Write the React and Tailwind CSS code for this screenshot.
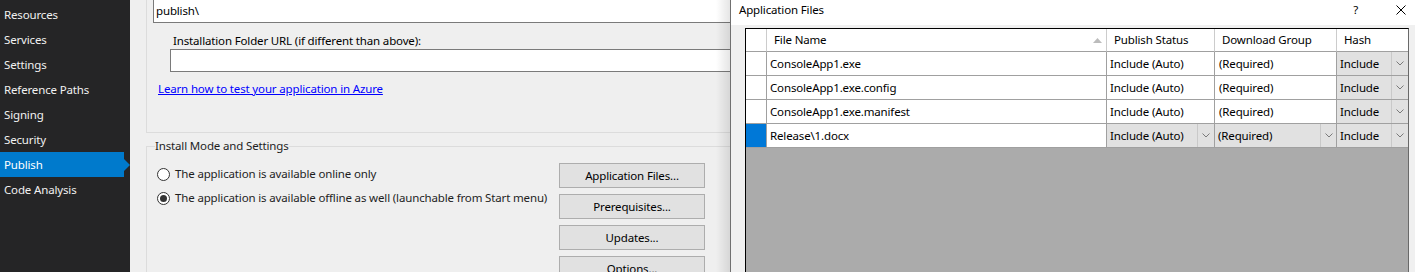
import React from "react";

const sideItems = [
  "Resources",
  "Services",
  "Settings",
  "Reference Paths",
  "Signing",
  "Security",
  "Publish",
  "Code Analysis",
];

function Chevron() {
  return (
    <svg width="8" height="5" viewBox="0 0 8 5">
      <polyline points="0.5,0.5 4,4 7.5,0.5" fill="none" stroke="#7a7a7a" strokeWidth="1" />
    </svg>
  );
}

function Combo({ text, arrowW = "w-[17px]" }) {
  return (
    <div className="flex h-full bg-[#e1e1e1]">
      <div className="flex flex-1 items-center pl-[3px] whitespace-nowrap">{text}</div>
      <div className={`${arrowW} flex shrink-0 items-center justify-center border-l border-[#c9c9c9]`}>
        <Chevron />
      </div>
    </div>
  );
}

function Radio({ checked, label }) {
  return (
    <div className="flex h-[24px] items-center gap-[5px] pl-[10px]">
      <div className="flex h-[13px] w-[13px] shrink-0 items-center justify-center rounded-full border border-[#333333] bg-white">
        {checked && <div className="h-[7px] w-[7px] rounded-full bg-[#333333]" />}
      </div>
      <span className="whitespace-nowrap text-[#1e1e1e]">{label}</span>
    </div>
  );
}

function Btn({ children }) {
  return (
    <div className="flex h-[25px] w-[146px] shrink-0 items-center justify-center border border-[#adadad] bg-[#e1e1e1] text-black">
      {children}
    </div>
  );
}

const rows = [
  { name: "ConsoleApp1.exe" },
  { name: "ConsoleApp1.exe.config" },
  { name: "ConsoleApp1.exe.manifest" },
  { name: "Release\\1.docx", active: true },
];

export default function App() {
  return (
    <div className="flex h-[272px] w-[1415px] overflow-hidden font-['Noto_Sans',sans-serif] text-[11.5px] leading-[16px] tracking-[-0.15px]">
      {/* Sidebar */}
      <div className="flex w-[130px] shrink-0 flex-col bg-[#252526] pt-[2px] text-[#f1f1f1]">
        {sideItems.map((it) =>
          it === "Publish" ? (
            <div key={it} className="flex h-[25px] items-center">
              <div className="flex h-full w-[124px] items-center bg-[#007acc] pl-[4px] text-white">{it}</div>
              <svg width="6" height="12" viewBox="0 0 6 12">
                <polygon points="0,0 6,6 0,12" fill="#007acc" />
              </svg>
            </div>
          ) : (
            <div key={it} className="flex h-[25px] items-center pl-[4px]">
              {it}
            </div>
          )
        )}
      </div>

      {/* Main panel */}
      <div className="relative w-[600px] shrink-0 overflow-hidden bg-[#efefef] pl-[16px] text-black">
        <div className="flex h-[133px] flex-col border-b border-l border-[#dcdcdc] pl-[6px]">
          <div className="mt-[-1px] flex h-[24px] w-[590px] shrink-0 items-center border border-[#7a7a7a] bg-white pl-[2px]">
            publish\
          </div>
          <div className="mt-[10px] h-[16px] shrink-0 pl-[20px] whitespace-nowrap">
            Installation Folder URL (if different than above):
          </div>
          <div className="ml-[17px] h-[23px] w-[580px] shrink-0 border border-[#7a7a7a] bg-white" />
          <div className="ml-[5px] mt-[9px] h-[16px] shrink-0">
            <span className="text-[#0000ff] underline">Learn how to test your application in Azure</span>
          </div>
        </div>

        <fieldset className="mt-[5px] h-[200px] min-w-0 border-l border-t border-[#dcdcdc]">
          <legend className="ml-[8px] px-0 leading-[16px] text-[#1e1e1e]">Install Mode and Settings</legend>
          <div className="flex">
            <div className="flex w-[412px] shrink-0 flex-col pt-[8px]">
              <Radio label="The application is available online only" />
              <Radio checked label="The application is available offline as well (launchable from Start menu)" />
            </div>
            <div className="flex flex-col gap-[6px] pt-[9px]">
              <Btn>Application Files...</Btn>
              <Btn>Prerequisites...</Btn>
              <Btn>Updates...</Btn>
              <Btn>Options...</Btn>
            </div>
          </div>
        </fieldset>

        <div className="absolute right-0 top-0 h-full w-[14px] bg-linear-to-r from-transparent to-[rgba(0,0,0,0.1)]" />
      </div>

      {/* Dialog */}
      <div className="flex w-[685px] shrink-0 flex-col border-l border-[#707070] text-black">
        <div className="flex h-[25px] shrink-0 items-start bg-white pl-[8px] pt-[2px]">
          <span>Application Files</span>
          <div className="ml-auto flex items-start">
            <span className="mr-[38px]">?</span>
            <svg className="mr-[9px] mt-[3px]" width="10" height="10" viewBox="0 0 10 10">
              <path d="M0.5 0.5 L9.5 9.5 M9.5 0.5 L0.5 9.5" stroke="#000" strokeWidth="1" />
            </svg>
          </div>
        </div>
        <div className="flex flex-1 bg-[#f0f0f0] pl-[14px] pt-[3px]">
          <div className="h-full w-[664px] border-l border-r border-t border-l-black border-r-[#696969] border-t-black bg-[#ababab]">
            <div className="grid grid-cols-[21px_340px_108px_122px_71px]">
              {/* header */}
              <div className="h-[23px] border-b border-r border-b-[#a0a0a0] border-r-[#cccccc] bg-white" />
              <div className="flex h-[23px] items-center justify-between border-b border-r border-b-[#a0a0a0] border-r-[#cccccc] bg-white pl-[7px] pr-[4px]">
                <span>File Name</span>
                <svg width="9" height="5" viewBox="0 0 9 5">
                  <polygon points="0,5 4.5,0 9,5" fill="#bcbcbc" />
                </svg>
              </div>
              <div className="flex h-[23px] items-center border-b border-r border-b-[#a0a0a0] border-r-[#cccccc] bg-white pl-[7px] whitespace-nowrap">
                Publish Status
              </div>
              <div className="flex h-[23px] items-center border-b border-r border-b-[#a0a0a0] border-r-[#cccccc] bg-white pl-[7px] whitespace-nowrap">
                Download Group
              </div>
              <div className="flex h-[23px] items-center border-b border-b-[#a0a0a0] bg-white pl-[7px]">Hash</div>

              {rows.map((r) => (
                <React.Fragment key={r.name}>
                  <div
                    className={`h-[24px] border-b border-r border-[#a0a0a0] ${r.active ? "bg-[#0078d7]" : "bg-white"}`}
                  />
                  <div className="flex h-[24px] items-center border-b border-r border-[#a0a0a0] bg-white pl-[3px] whitespace-nowrap">
                    {r.name}
                  </div>
                  {r.active ? (
                    <div className="h-[24px] border-b border-r border-[#a0a0a0]">
                      <Combo text="Include (Auto)" />
                    </div>
                  ) : (
                    <div className="flex h-[24px] items-center border-b border-r border-[#a0a0a0] bg-white pl-[3px] whitespace-nowrap">
                      Include (Auto)
                    </div>
                  )}
                  {r.active ? (
                    <div className="h-[24px] border-b border-r border-[#a0a0a0]">
                      <Combo text="(Required)" arrowW="w-[16px]" />
                    </div>
                  ) : (
                    <div className="flex h-[24px] items-center border-b border-r border-[#a0a0a0] bg-white pl-[4px] whitespace-nowrap">
                      (Required)
                    </div>
                  )}
                  <div className="h-[24px] border-b border-[#a0a0a0]">
                    <Combo text="Include" />
                  </div>
                </React.Fragment>
              ))}
            </div>
          </div>
        </div>
      </div>
    </div>
  );
}
